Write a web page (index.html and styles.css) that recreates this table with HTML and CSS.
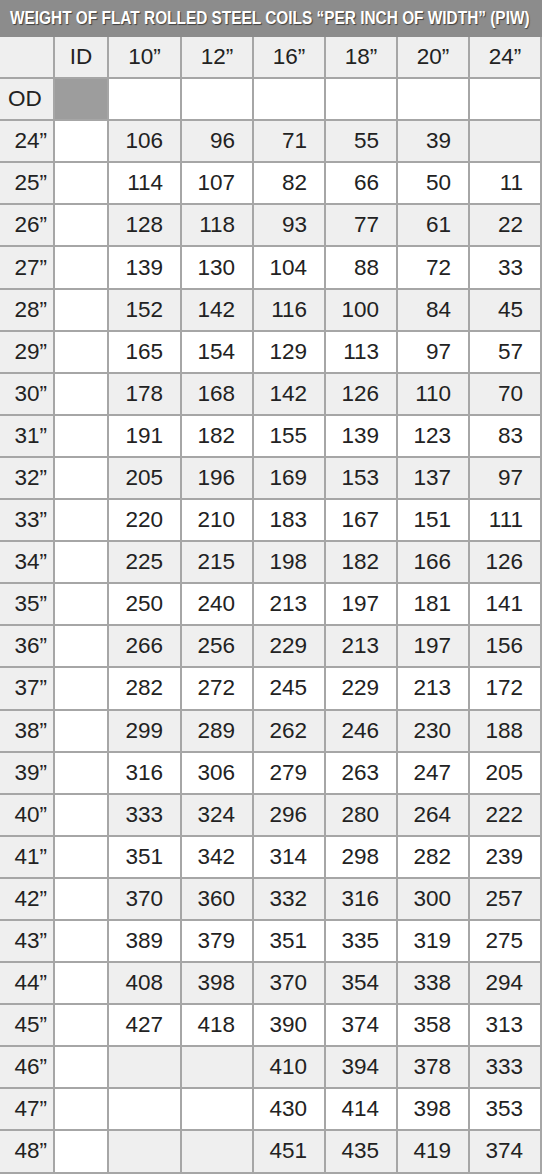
FILE: index.html
```html
<!DOCTYPE html>
<html>
<head>
<meta charset="utf-8">
<link rel="stylesheet" href="styles.css">
</head>
<body>
<div class="sheet">
  <div class="title"><span class="title-text">WEIGHT OF FLAT ROLLED STEEL COILS “PER INCH OF WIDTH” (PIW)</span></div>
  <table class="piw">
    <colgroup>
      <col class="c-od"><col class="c-id"><col class="c-w1"><col class="c-w"><col class="c-w"><col class="c-w"><col class="c-w"><col class="c-w">
    </colgroup>
    <thead>
      <tr class="head">
        <th class="lab"></th><th class="idc">ID</th><th>10”</th><th>12”</th><th>16”</th><th>18”</th><th>20”</th><th>24”</th>
      </tr>
    </thead>
    <tbody>
      <tr class="odrow"><td class="lab od">OD</td><td class="iddark"></td><td></td><td></td><td></td><td></td><td></td><td></td></tr>
      <tr class="alt"><td class="lab">24”</td><td class="idc"></td><td>106</td><td>96</td><td>71</td><td>55</td><td>39</td><td></td></tr>
      <tr><td class="lab">25”</td><td class="idc"></td><td>114</td><td>107</td><td>82</td><td>66</td><td>50</td><td>11</td></tr>
      <tr class="alt"><td class="lab">26”</td><td class="idc"></td><td>128</td><td>118</td><td>93</td><td>77</td><td>61</td><td>22</td></tr>
      <tr><td class="lab">27”</td><td class="idc"></td><td>139</td><td>130</td><td>104</td><td>88</td><td>72</td><td>33</td></tr>
      <tr class="alt"><td class="lab">28”</td><td class="idc"></td><td>152</td><td>142</td><td>116</td><td>100</td><td>84</td><td>45</td></tr>
      <tr><td class="lab">29”</td><td class="idc"></td><td>165</td><td>154</td><td>129</td><td>113</td><td>97</td><td>57</td></tr>
      <tr class="alt"><td class="lab">30”</td><td class="idc"></td><td>178</td><td>168</td><td>142</td><td>126</td><td>110</td><td>70</td></tr>
      <tr><td class="lab">31”</td><td class="idc"></td><td>191</td><td>182</td><td>155</td><td>139</td><td>123</td><td>83</td></tr>
      <tr class="alt"><td class="lab">32”</td><td class="idc"></td><td>205</td><td>196</td><td>169</td><td>153</td><td>137</td><td>97</td></tr>
      <tr><td class="lab">33”</td><td class="idc"></td><td>220</td><td>210</td><td>183</td><td>167</td><td>151</td><td>111</td></tr>
      <tr class="alt"><td class="lab">34”</td><td class="idc"></td><td>225</td><td>215</td><td>198</td><td>182</td><td>166</td><td>126</td></tr>
      <tr><td class="lab">35”</td><td class="idc"></td><td>250</td><td>240</td><td>213</td><td>197</td><td>181</td><td>141</td></tr>
      <tr class="alt"><td class="lab">36”</td><td class="idc"></td><td>266</td><td>256</td><td>229</td><td>213</td><td>197</td><td>156</td></tr>
      <tr><td class="lab">37”</td><td class="idc"></td><td>282</td><td>272</td><td>245</td><td>229</td><td>213</td><td>172</td></tr>
      <tr class="alt"><td class="lab">38”</td><td class="idc"></td><td>299</td><td>289</td><td>262</td><td>246</td><td>230</td><td>188</td></tr>
      <tr><td class="lab">39”</td><td class="idc"></td><td>316</td><td>306</td><td>279</td><td>263</td><td>247</td><td>205</td></tr>
      <tr class="alt"><td class="lab">40”</td><td class="idc"></td><td>333</td><td>324</td><td>296</td><td>280</td><td>264</td><td>222</td></tr>
      <tr><td class="lab">41”</td><td class="idc"></td><td>351</td><td>342</td><td>314</td><td>298</td><td>282</td><td>239</td></tr>
      <tr class="alt"><td class="lab">42”</td><td class="idc"></td><td>370</td><td>360</td><td>332</td><td>316</td><td>300</td><td>257</td></tr>
      <tr><td class="lab">43”</td><td class="idc"></td><td>389</td><td>379</td><td>351</td><td>335</td><td>319</td><td>275</td></tr>
      <tr class="alt"><td class="lab">44”</td><td class="idc"></td><td>408</td><td>398</td><td>370</td><td>354</td><td>338</td><td>294</td></tr>
      <tr><td class="lab">45”</td><td class="idc"></td><td>427</td><td>418</td><td>390</td><td>374</td><td>358</td><td>313</td></tr>
      <tr class="alt"><td class="lab">46”</td><td class="idc"></td><td></td><td></td><td>410</td><td>394</td><td>378</td><td>333</td></tr>
      <tr><td class="lab">47”</td><td class="idc"></td><td></td><td></td><td>430</td><td>414</td><td>398</td><td>353</td></tr>
      <tr class="alt"><td class="lab">48”</td><td class="idc"></td><td></td><td></td><td>451</td><td>435</td><td>419</td><td>374</td></tr>
    </tbody>
  </table>
</div>
</body>
</html>
```

FILE: styles.css
```css
html, body {
  margin: 0;
  padding: 0;
  background: #ffffff;
}

.sheet {
  width: 542px;
  font-family: "Liberation Sans", Arial, sans-serif;
  color: #222222;
}

.title {
  height: 37px;
  background: #8c8c8c;
  box-sizing: border-box;
  padding-top: 7px;
  white-space: nowrap;
  overflow: hidden;
}

.title-text {
  display: inline-block;
  font-family: "Liberation Sans", Arial, sans-serif;
  font-weight: bold;
  font-size: 17.5px;
  line-height: 22px;
  color: #ffffff;
  text-shadow: 1px 1px 1px rgba(0, 0, 0, 0.55);
  transform-origin: 0 0;
  transform: scaleX(0.88);
  margin-left: 10px;
}

.piw {
  width: 542px;
  table-layout: fixed;
  border-collapse: collapse;
  font-size: 22.5px;
}

.c-od { width: 54px; }
.c-id { width: 54px; }
.c-w1 { width: 73px; }
.c-w { width: 72px; }

.piw th,
.piw td {
  border: 2px solid #a6a6a6;
  height: 40.1px;
  padding: 0 17px 0 0;
  text-align: right;
  font-weight: normal;
  line-height: 26px;
  vertical-align: middle;
}

.piw th {
  text-align: center;
  padding: 0;
}

.piw tr:first-child th,
.piw tr:first-child td { border-top: none; }

.piw th:first-child,
.piw td:first-child { border-left: none; }

.head th { background: #efefef; }

.alt td { background: #efefef; }

.piw td.lab {
  background: #efefef;
  padding: 0 6px 0 0;
  text-align: right;
}

.piw td.od {
  text-align: left;
  padding: 0 0 0 8px;
}

.piw td.idc { background: #ffffff; }
.piw th.idc { background: #efefef; }

.piw td.iddark { background: #9d9d9d; }
```
